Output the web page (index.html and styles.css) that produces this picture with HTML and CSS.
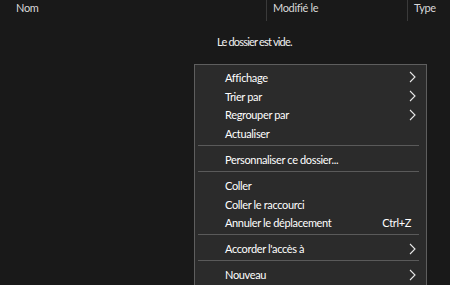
FILE: index.html
```html
<!DOCTYPE html>
<html lang="fr">
<head>
    <meta charset="UTF-8">
    <title>Dossier vide</title>
    <link rel="stylesheet" href="styles.css">
</head>
<body>

<div class="columns">
    <div class="col col-name">Nom</div>
    <div class="col col-date">Modifié le</div>
    <div class="col col-type">Type</div>
</div>

<div class="empty">Le dossier est vide.</div>

<div class="menu">
    <div class="item"><span>Affichage</span><svg class="arrow" viewBox="0 0 7 12"><polyline points="1,1 6,6 1,11"/></svg></div>
    <div class="item"><span>Trier par</span><svg class="arrow" viewBox="0 0 7 12"><polyline points="1,1 6,6 1,11"/></svg></div>
    <div class="item"><span>Regrouper par</span><svg class="arrow" viewBox="0 0 7 12"><polyline points="1,1 6,6 1,11"/></svg></div>
    <div class="item"><span>Actualiser</span></div>
    <div class="sep"></div>
    <div class="item"><span>Personnaliser ce dossier...</span></div>
    <div class="sep"></div>
    <div class="item"><span>Coller</span></div>
    <div class="item"><span>Coller le raccourci</span></div>
    <div class="item"><span>Annuler le déplacement</span><span class="key">Ctrl+Z</span></div>
    <div class="sep"></div>
    <div class="item"><span>Accorder l'accès à</span><svg class="arrow" viewBox="0 0 7 12"><polyline points="1,1 6,6 1,11"/></svg></div>
    <div class="sep"></div>
    <div class="item"><span>Nouveau</span><svg class="arrow" viewBox="0 0 7 12"><polyline points="1,1 6,6 1,11"/></svg></div>
</div>

</body>
</html>
```

FILE: styles.css
```css
* {
    box-sizing: border-box;
}

body {
    margin: 0;
    padding: 0;
    background-color: #191919;
    color: #e6e6e6;
    font-family: Lato, "Noto Sans", sans-serif;
    font-size: 11px;
    letter-spacing: -0.35px;
    height: 285px;
    overflow: hidden;
    display: flex;
    flex-direction: column;
}

.columns {
    display: flex;
    height: 21px;
    flex-shrink: 0;
}

.col {
    padding-top: 1px;
    padding-left: 6px;
    color: #d8d8d8;
}

.col-name {
    width: 266px;
    padding-left: 16px;
}

.col-date {
    width: 141px;
    border-left: 1px solid #3a3a3a;
}

.col-type {
    flex: 1;
    border-left: 1px solid #3a3a3a;
}

.empty {
    height: 14px;
    margin-top: 14px;
    margin-left: 217px;
    color: #f0f0f0;
    letter-spacing: -0.8px;
}

.menu {
    flex: 1;
    margin-top: 15px;
    margin-left: 194px;
    width: 233px;
    padding-top: 3px;
    background-color: #2b2b2b;
    border: 1px solid #5e5e5e;
    border-bottom: none;
    overflow: hidden;
}

.item {
    display: flex;
    align-items: center;
    justify-content: space-between;
    height: 18.8px;
    padding-left: 30px;
    padding-right: 10px;
    color: #ffffff;
}

.key {
    padding-right: 5px;
}

.arrow {
    width: 7px;
    height: 12px;
    fill: none;
    stroke: #e8e8e8;
    stroke-width: 1.1;
}

.sep {
    height: 1px;
    margin: 2px 7px 4px 3px;
    background-color: #5a5a5a;
}
```
